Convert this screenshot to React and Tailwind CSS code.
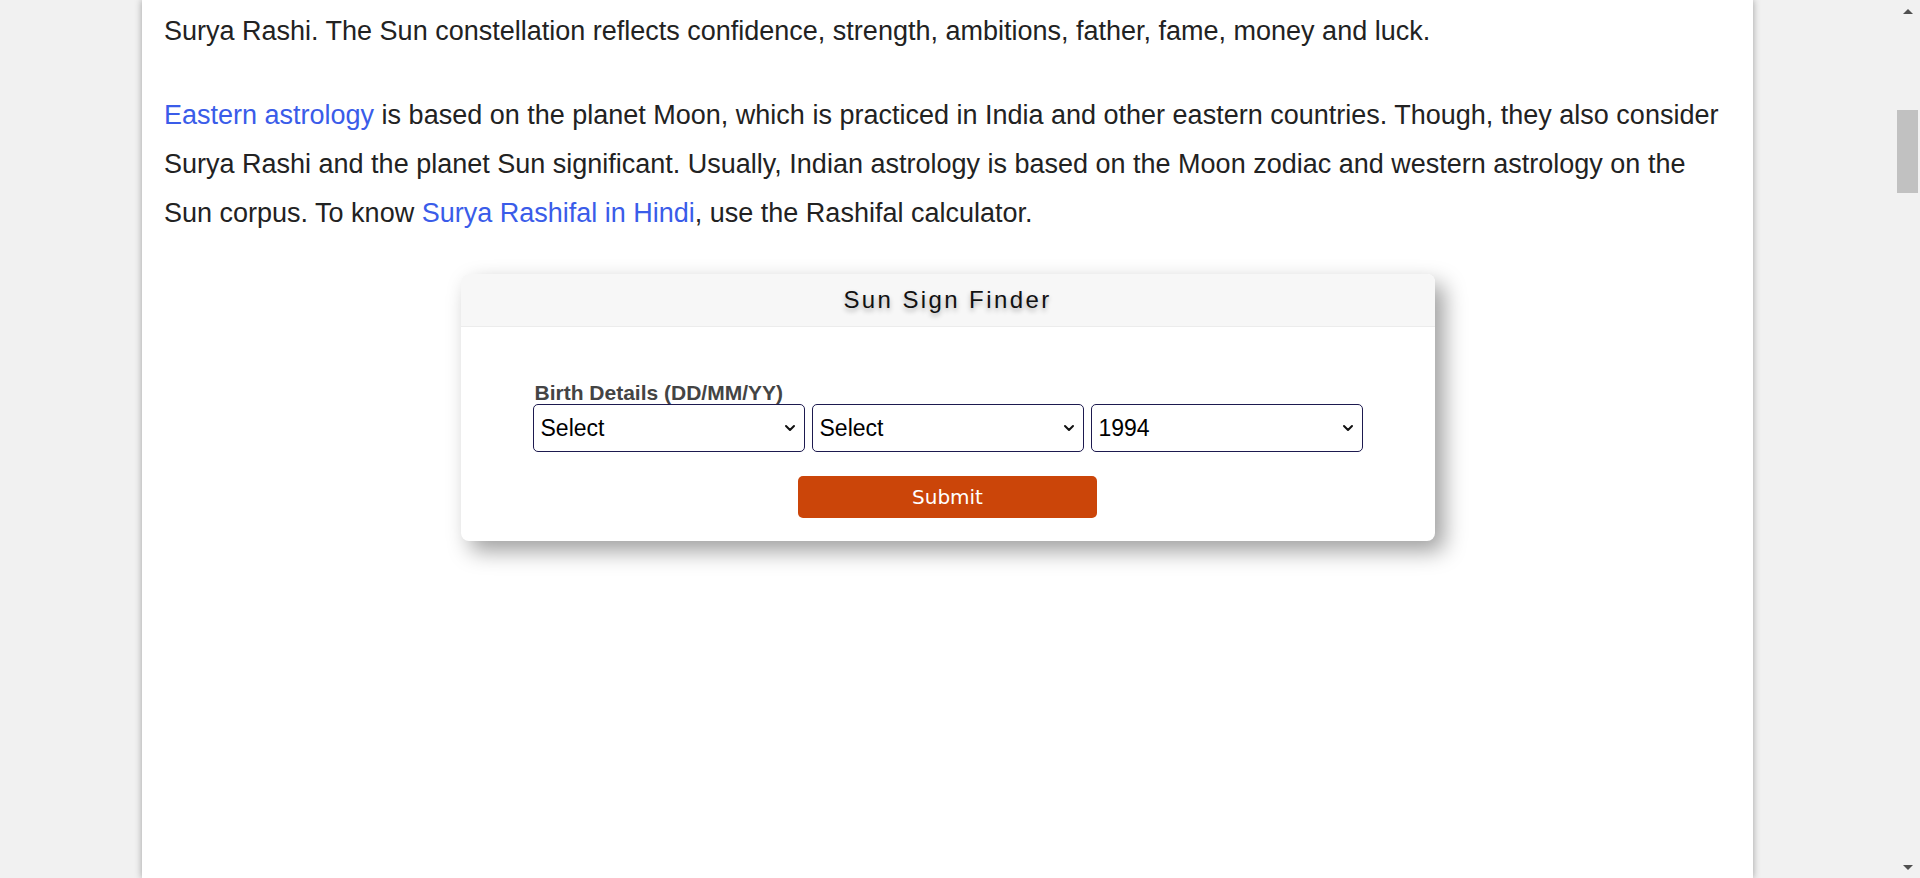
import React from "react";

function Chevron() {
  return (
    <svg width="12" height="8" viewBox="0 0 12 8" className="pointer-events-none absolute right-[9px] top-1/2 -translate-y-1/2">
      <path d="M2 2 L6 6 L10 2" fill="none" stroke="#111" strokeWidth="2" strokeLinecap="round" strokeLinejoin="round" />
    </svg>
  );
}

function FakeSelect({ value }) {
  return (
    <div className="relative h-[48px] w-[272px]">
      <select
        defaultValue={value}
        className="h-full w-full appearance-none rounded-[5px] border border-[#1d1a4f] bg-white pl-[7px] text-[23px] text-black outline-none font-['Liberation_Sans',Arial,sans-serif]"
      >
        <option value={value}>{value}</option>
      </select>
      <Chevron />
    </div>
  );
}

export default function App() {
  return (
    <div className="flex h-[878px] w-full overflow-hidden bg-[#f1f1f1] font-['Liberation_Sans',Arial,sans-serif]">
      <div className="flex-1 pl-[142px]">
        <div className="h-full w-[1611px] bg-white px-[22px] pt-[7px] shadow-[0_0_7px_rgba(0,0,0,0.35)]">
          <p className="text-[27px] leading-[49px] text-[#222]">
            Surya Rashi. The Sun constellation reflects confidence, strength, ambitions, father, fame, money and luck.
          </p>
          <p className="mt-[35px] text-[27px] leading-[49px] text-[#222]">
            <a className="text-[#3a5ce9]">Eastern astrology</a> is based on the planet Moon, which is practiced in India and other eastern countries. Though, they also consider Surya Rashi and the planet Sun significant. Usually, Indian astrology is based on the Moon zodiac and western astrology on the Sun corpus. To know{" "}
            <a className="text-[#3a5ce9]">Surya Rashifal in Hindi</a>, use the Rashifal calculator.
          </p>

          <div className="mx-auto mt-[36px] w-[974px] rounded-[8px] bg-white shadow-[9px_10px_22px_rgba(0,0,0,0.38)]">
            <div className="flex h-[53px] items-center justify-center rounded-t-[8px] border-b border-[#ececec] bg-[#f7f7f7]">
              <span className="text-[24px] tracking-[2.4px] text-[#111] [text-shadow:0_3px_5px_rgba(0,0,0,0.3)]">
                Sun Sign Finder
              </span>
            </div>
            <div className="flex flex-col items-center pb-[23px] pt-[54px]">
              <div className="flex flex-col">
                <label className="pl-[2px] text-[21px] font-bold leading-[23px] text-[#444]">
                  Birth Details (DD/MM/YY)
                </label>
                <div className="flex gap-[7px]">
                  <FakeSelect value="Select" />
                  <FakeSelect value="Select" />
                  <FakeSelect value="1994" />
                </div>
              </div>
              <button className="mt-[24px] h-[42px] w-[299px] rounded-[5px] bg-[#cb4509] text-[20px] text-white font-['DejaVu_Sans',Verdana,sans-serif]">
                Submit
              </button>
            </div>
          </div>
        </div>
      </div>

      <div className="flex w-[23px] flex-col items-start bg-[#f1f1f1]">
        <div className="flex h-[22px] w-[21px] items-center justify-center">
          <div className="h-0 w-0 border-x-[5px] border-b-[5px] border-x-transparent border-b-[#505050]" />
        </div>
        <div className="mt-[88px] h-[83px] w-[21px] bg-[#c1c1c1]" />
        <div className="flex-1" />
        <div className="flex h-[22px] w-[21px] items-center justify-center">
          <div className="h-0 w-0 border-x-[5px] border-t-[5px] border-x-transparent border-t-[#505050]" />
        </div>
      </div>
    </div>
  );
}
